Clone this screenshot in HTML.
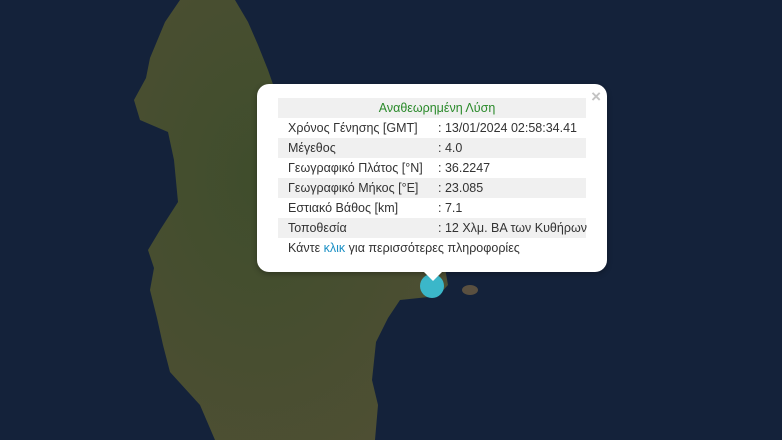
<!DOCTYPE html>
<html><head><meta charset="utf-8"><style>
body{margin:0;width:782px;height:440px;overflow:hidden;background:#14223a;font-family:"Liberation Sans",Arial,sans-serif;position:relative}
svg{position:absolute;left:0;top:0}
.pop{position:absolute;left:257px;top:84px;width:350px;height:188px;background:#fff;border-radius:12px;box-shadow:0 2px 6px rgba(0,0,0,.3)}
.tip{position:absolute;left:423px;top:271px;width:0;height:0;border-left:10px solid transparent;border-right:10px solid transparent;border-top:10px solid #fff}
.x{position:absolute;right:6px;top:3px;color:#c3c3c3;font-size:17px;font-weight:bold}
table{position:absolute;left:21px;top:14px;width:308px;border-collapse:collapse;font-size:12.5px;color:#333;table-layout:fixed}
td{height:20px;padding:0 0 0 10px;white-space:nowrap;overflow:visible}
tr.g td{background:#f0f0f0}
td.v{padding-left:0}
.t{color:#2a8a2a;text-align:center}
a{color:#1a8fc4;text-decoration:none}
</style></head><body>
<svg width="782" height="440">
<defs><radialGradient id="l" cx="40%" cy="40%" r="70%"><stop offset="0" stop-color="#3f4d2c"/><stop offset="1" stop-color="#4e4f33"/></radialGradient></defs>
<path d="M180,0 L235,0 L248,22 L258,45 L268,70 L275,90 L300,130 L340,170 L380,210 L420,245 L445,268 L448,285 L438,296 L400,300 L388,318 L376,342 L372,380 L378,405 L375,440 L215,440 L200,405 L170,372 L163,345 L157,318 L150,290 L154,268 L148,250 L160,230 L178,202 L174,160 L168,132 L140,120 L134,100 L146,78 L150,58 L165,22 Z" fill="url(#l)"/>
<ellipse cx="470" cy="290" rx="8" ry="5" fill="#5a5040"/>
<circle cx="432" cy="286" r="12" fill="#3bb7c9"/>
</svg>
<div class="pop"><span class="x">×</span>
<table>
<colgroup><col style="width:160px"><col style="width:148px"></colgroup>
<tr class="g"><td colspan="2" class="t">Αναθεωρημένη Λύση</td></tr>
<tr><td>Χρόνος Γένησης [GMT]</td><td class="v">: 13/01/2024 02:58:34.41</td></tr>
<tr class="g"><td>Μέγεθος</td><td class="v">: 4.0</td></tr>
<tr><td>Γεωγραφικό Πλάτος [°N]</td><td class="v">: 36.2247</td></tr>
<tr class="g"><td>Γεωγραφικό Μήκος [°E]</td><td class="v">: 23.085</td></tr>
<tr><td>Εστιακό Βάθος [km]</td><td class="v">: 7.1</td></tr>
<tr class="g"><td>Τοποθεσία</td><td class="v">: 12 Χλμ. ΒΑ των Κυθήρων</td></tr>
<tr><td colspan="2">Κάντε <a>κλικ</a> για περισσότερες πληροφορίες</td></tr>
</table></div>
<div class="tip"></div>
</body></html>
